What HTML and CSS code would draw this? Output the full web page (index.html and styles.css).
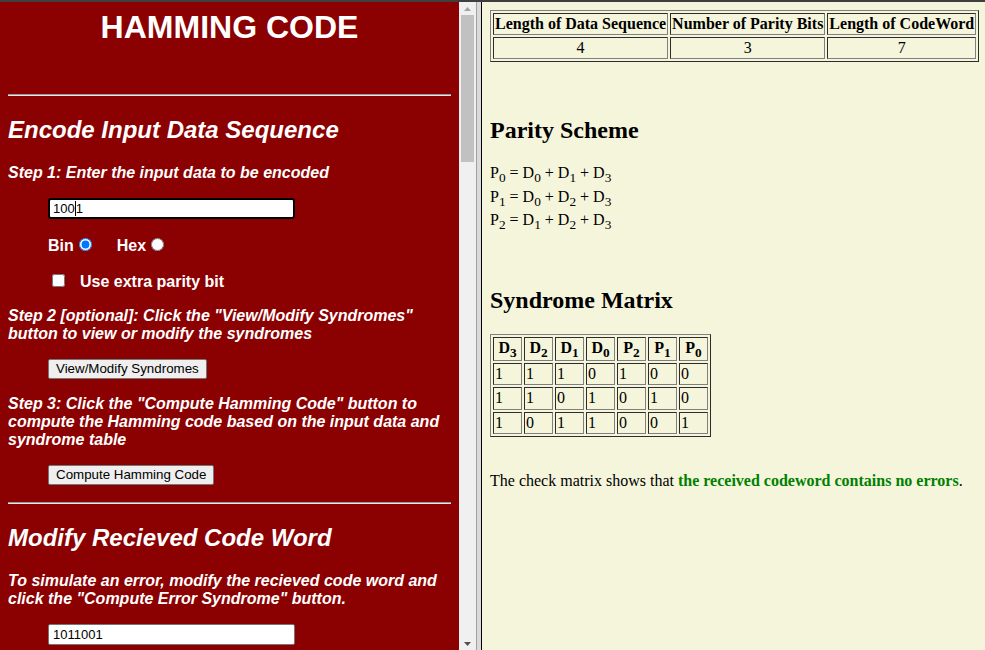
FILE: index.html
```html
<!DOCTYPE html>
<html>
<head>
<meta charset="utf-8">
<title>Hamming Code</title>
<link rel="stylesheet" href="styles.css">
</head>
<body>
<div class="topline"></div>
<div class="frames">
  <div class="left-frame">
    <div class="left-content">
      <h1 class="title">HAMMING CODE</h1>
      <hr class="rule rule-first">
      <h2 class="sect">Encode Input Data Sequence</h2>
      <p class="step">Step 1: Enter the input data to be encoded</p>
      <div class="field focused">100<span class="caret"></span>1</div>
      <div class="radios"><label class="opt opt-bin">Bin<input class="radio" type="radio" name="fmt" checked></label><label class="opt">Hex<input class="radio" type="radio" name="fmt"></label></div>
      <div class="checkrow">
        <input class="check" type="checkbox"><span class="check-label">Use extra parity bit</span>
      </div>
      <p class="step">Step 2 [optional]: Click the "View/Modify Syndromes" button to view or modify the syndromes</p>
      <div class="btn-row"><button class="btn" type="button">View/Modify Syndromes</button></div>
      <p class="step">Step 3: Click the "Compute Hamming Code" button to compute the Hamming code based on the input data and syndrome table</p>
      <div class="btn-row"><button class="btn" type="button">Compute Hamming Code</button></div>
      <hr class="rule rule-second">
      <h2 class="sect">Modify Recieved Code Word</h2>
      <p class="step">To simulate an error, modify the recieved code word and click the "Compute Error Syndrome" button.</p>
      <div class="field plain">1011001</div>
    </div>
    <div class="scrollbar">
      <div class="sb-btn"><svg width="7" height="4" viewBox="0 0 7 4"><polygon points="0,4 3.5,0 7,4" fill="#a3a3a3"/></svg></div>
      <div class="sb-thumb"></div>
      <div class="sb-track"></div>
      <div class="sb-btn"><svg width="7" height="4" viewBox="0 0 7 4"><polygon points="0,0 7,0 3.5,4" fill="#505050"/></svg></div>
    </div>
  </div>
  <div class="divider"></div>
  <div class="right-frame">
    <table class="grid info">
      <tr><th>Length of Data Sequence</th><th>Number of Parity Bits</th><th>Length of CodeWord</th></tr>
      <tr><td>4</td><td>3</td><td>7</td></tr>
    </table>
    <h2 class="rhead rhead-parity">Parity Scheme</h2>
    <div class="eqs">
      <div class="eq">P<sub>0</sub> = D<sub>0</sub> + D<sub>1</sub> + D<sub>3</sub></div>
      <div class="eq">P<sub>1</sub> = D<sub>0</sub> + D<sub>2</sub> + D<sub>3</sub></div>
      <div class="eq">P<sub>2</sub> = D<sub>1</sub> + D<sub>2</sub> + D<sub>3</sub></div>
    </div>
    <h2 class="rhead rhead-syn">Syndrome Matrix</h2>
    <table class="grid syn">
      <tr><th>D<sub>3</sub></th><th>D<sub>2</sub></th><th>D<sub>1</sub></th><th>D<sub>0</sub></th><th>P<sub>2</sub></th><th>P<sub>1</sub></th><th>P<sub>0</sub></th></tr>
      <tr><td>1</td><td>1</td><td>1</td><td>0</td><td>1</td><td>0</td><td>0</td></tr>
      <tr><td>1</td><td>1</td><td>0</td><td>1</td><td>0</td><td>1</td><td>0</td></tr>
      <tr><td>1</td><td>0</td><td>1</td><td>1</td><td>0</td><td>0</td><td>1</td></tr>
    </table>
    <p class="result">The check matrix shows that <b class="ok">the received codeword contains no errors</b>.</p>
  </div>
</div>
</body>
</html>
```
FILE: styles.css
```css
* { box-sizing: border-box; }
html, body { margin: 0; padding: 0; overflow: hidden; }
body { width: 985px; height: 650px; display: flex; flex-direction: column; }

.topline { height: 2px; background: #3f3f3f; flex: none; }
.frames { flex: 1; display: flex; min-height: 0; }

/* left frame */
.left-frame { width: 476px; flex: none; display: flex; background: #8b0000; }
.left-content {
  flex: 1; overflow: hidden; padding: 0 8px;
  color: #fff; font-family: "Liberation Sans", Arial, sans-serif; font-size: 16px;
}
.title { margin: 7px 0 0; font-size: 32px; line-height: 37px; font-weight: bold; text-align: center; }
.rule { height: 2px; border: 0; border-top: 1px solid #9a9a9a; border-bottom: 1px solid #e6e6e6; margin: 0; }
.rule-first { margin-top: 48px; }
.rule-second { margin-top: 17px; }
.sect { margin: 19.9px 0; font-size: 24px; font-weight: bold; font-style: italic; line-height: normal; }
.step { margin: 16px 0; font-weight: bold; font-style: italic; line-height: normal; }

.field {
  margin: 16px 0 0 40px; width: 247px; height: 21px; background: #fff; color: #000;
  font-family: "Liberation Sans", Arial, sans-serif; font-size: 13px; white-space: nowrap;
}
.focused { border: 2px solid #000; border-radius: 3px; padding: 0 3px; line-height: 17px; }
.plain { border: 1px solid #767676; border-radius: 2px; padding: 0 4px; line-height: 19px; }
.caret { display: inline-block; width: 1px; height: 15px; background: #000; vertical-align: -3px; }

.radios { margin: 16px 0 0 40px; font-weight: bold; line-height: normal; }
.opt-bin { margin-right: 22px; }
.radio { margin: 3px 3px 0 5px; width: 13px; height: 13px; }
.checkrow { margin: 16px 0 0 40px; font-weight: bold; line-height: normal; }
.check { margin: 3px 3px 0 4px; width: 13px; height: 13px; vertical-align: baseline; }
.check-label { margin-left: 12px; }

.btn-row { margin: 0 0 0 40px; height: 20px; }
.btn {
  height: 20px; padding: 0 7px; border: 1px solid #767676; border-radius: 2px;
  background: #efefef; color: #000; font-family: "Liberation Sans", Arial, sans-serif; font-size: 13.33px;
}

/* scrollbar */
.scrollbar { width: 17px; flex: none; background: #f0f0f0; display: flex; flex-direction: column; }
.sb-btn { height: 13px; display: flex; align-items: center; justify-content: center; flex: none; }
.sb-thumb { height: 147px; margin: 0 2px; background: #c1c1c1; flex: none; }
.sb-track { flex: 1; }

.divider { width: 6px; flex: none; background: #dadada; border-left: 1px solid #a0a0a0; border-right: 1px solid #000; }

/* right frame */
.right-frame {
  flex: 1; overflow: hidden; padding: 8px; background: #f5f5dc; color: #000;
  font-family: "Liberation Serif", "Times New Roman", serif; font-size: 16px;
}
.grid { border: 1px outset #808080; border-spacing: 2px; }
.grid td, .grid th { border: 1px inset #808080; padding: 1px; line-height: normal; white-space: nowrap; }
.info td { text-align: center; }
.syn th, .syn td { width: 29px; line-height: 18.4px; }
.syn th { text-align: center; padding: 1px 1px 3px; }
.syn td { text-align: left; }
sub { font-size: 13.33px; vertical-align: -4px; line-height: 0; }

.rhead { font-size: 24px; font-weight: bold; line-height: normal; margin: 0; }
.rhead-parity { margin-top: 55px; }
.eqs { margin-top: 17px; line-height: 23.5px; }
.rhead-syn { margin-top: 55px; }
.syn { margin-top: 20px; }
.result { margin: 35px 0 0; line-height: 18.4px; }
.ok { color: #008000; }
```
